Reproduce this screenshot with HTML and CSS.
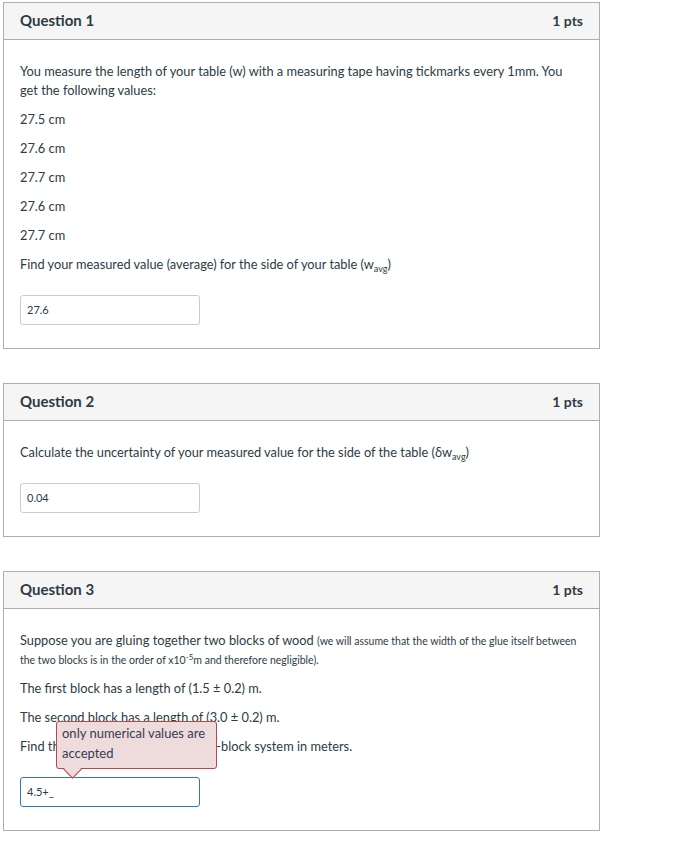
FILE: index.html
```html
<!DOCTYPE html>
<html>
<head>
<meta charset="utf-8">
<link rel="stylesheet" href="styles.css">
</head>
<body>
<div class="page">
  <div class="card">
    <div class="card-head"><span class="q-title">Question 1</span><span class="pts">1 pts</span></div>
    <div class="card-body">
      <p>You measure the length of your table (w) with a measuring tape having tickmarks every 1mm. You get the following values:</p>
      <p class="val">27.5 cm</p>
      <p class="val">27.6 cm</p>
      <p class="val">27.7 cm</p>
      <p class="val">27.6 cm</p>
      <p class="val">27.7 cm</p>
      <p>Find your measured value (average) for the side of your table (w<sub>avg</sub>)</p>
      <div class="answer"><div class="input">27.6</div></div>
    </div>
  </div>

  <div class="card">
    <div class="card-head"><span class="q-title">Question 2</span><span class="pts">1 pts</span></div>
    <div class="card-body">
      <p>Calculate the uncertainty of your measured value for the side of the table (δw<sub>avg</sub>)</p>
      <div class="answer"><div class="input">0.04</div></div>
    </div>
  </div>

  <div class="card">
    <div class="card-head"><span class="q-title">Question 3</span><span class="pts">1 pts</span></div>
    <div class="card-body">
      <p>Suppose you are gluing together two blocks of wood <span class="small">(we will assume that the width of the glue itself between the two blocks is in the order of x10<sup>-5</sup>m and therefore negligible).</span></p>
      <p>The first block has a length of (1.5 ± 0.2) m.</p>
      <p>The second block has a length of (3.0 ± 0.2) m.</p>
      <p>Find the total length of the full two-block system in meters.</p>
      <div class="answer">
        <div class="input focus">4.5+_</div>
        <div class="tip">only numerical values are accepted<span class="arrow"></span></div>
      </div>
    </div>
  </div>
</div>
</body>
</html>
```

FILE: styles.css
```css
html, body {
  margin: 0;
  padding: 0;
  background: #fff;
}
body {
  font-family: Lato, "Noto Sans", sans-serif;
  color: #2d3b45;
}
.page {
  padding: 2px 0 0 3px;
  width: 597px;
}
.card {
  border: 1px solid #aeaeae;
  margin-bottom: 34px;
}
.card-head {
  background: #f5f5f5;
  border-bottom: 1px solid #aeaeae;
  height: 34px;
  padding: 0 16px 2px;
  display: flex;
  align-items: center;
  justify-content: space-between;
}
.q-title {
  font-weight: 700;
  font-size: 15px;
}
.pts {
  font-weight: 700;
  font-size: 14px;
}
.card-body {
  padding: 22px 16px 23px;
}
.card-body p {
  margin: 0 0 10px;
  font-size: 12.8px;
  line-height: 19px;
}
.card-body p.val {
  font-size: 12.8px;
}
sub {
  font-size: 9px;
  line-height: 0;
  vertical-align: -3px;
}
sup {
  font-size: 8px;
  line-height: 0;
  vertical-align: 4px;
}
.small {
  font-size: 10.5px;
  line-height: 1;
}
.answer {
  position: relative;
  padding-top: 11px;
}
.input {
  width: 166px;
  height: 28px;
  border: 1px solid #c7cdd1;
  border-radius: 3px;
  padding: 0 6px;
  font-size: 11px;
  line-height: 28px;
  color: #2d3b45;
}
.input.focus {
  border-color: #2b7abc;
}
.tip {
  position: absolute;
  left: 36px;
  top: -45px;
  width: 152px;
  height: 40px;
  padding: 1px 2px 5px 5px;
  background: #eedcdc;
  border: 1px solid #b5494a;
  border-radius: 3px;
  font-size: 13px;
  line-height: 20px;
  color: #383a55;
}
.arrow {
  position: absolute;
  left: 9px;
  bottom: -8px;
  width: 12px;
  height: 12px;
  background: #eedcdc;
  border-right: 1px solid #b5494a;
  border-bottom: 1px solid #b5494a;
  transform: rotate(45deg);
}
```
